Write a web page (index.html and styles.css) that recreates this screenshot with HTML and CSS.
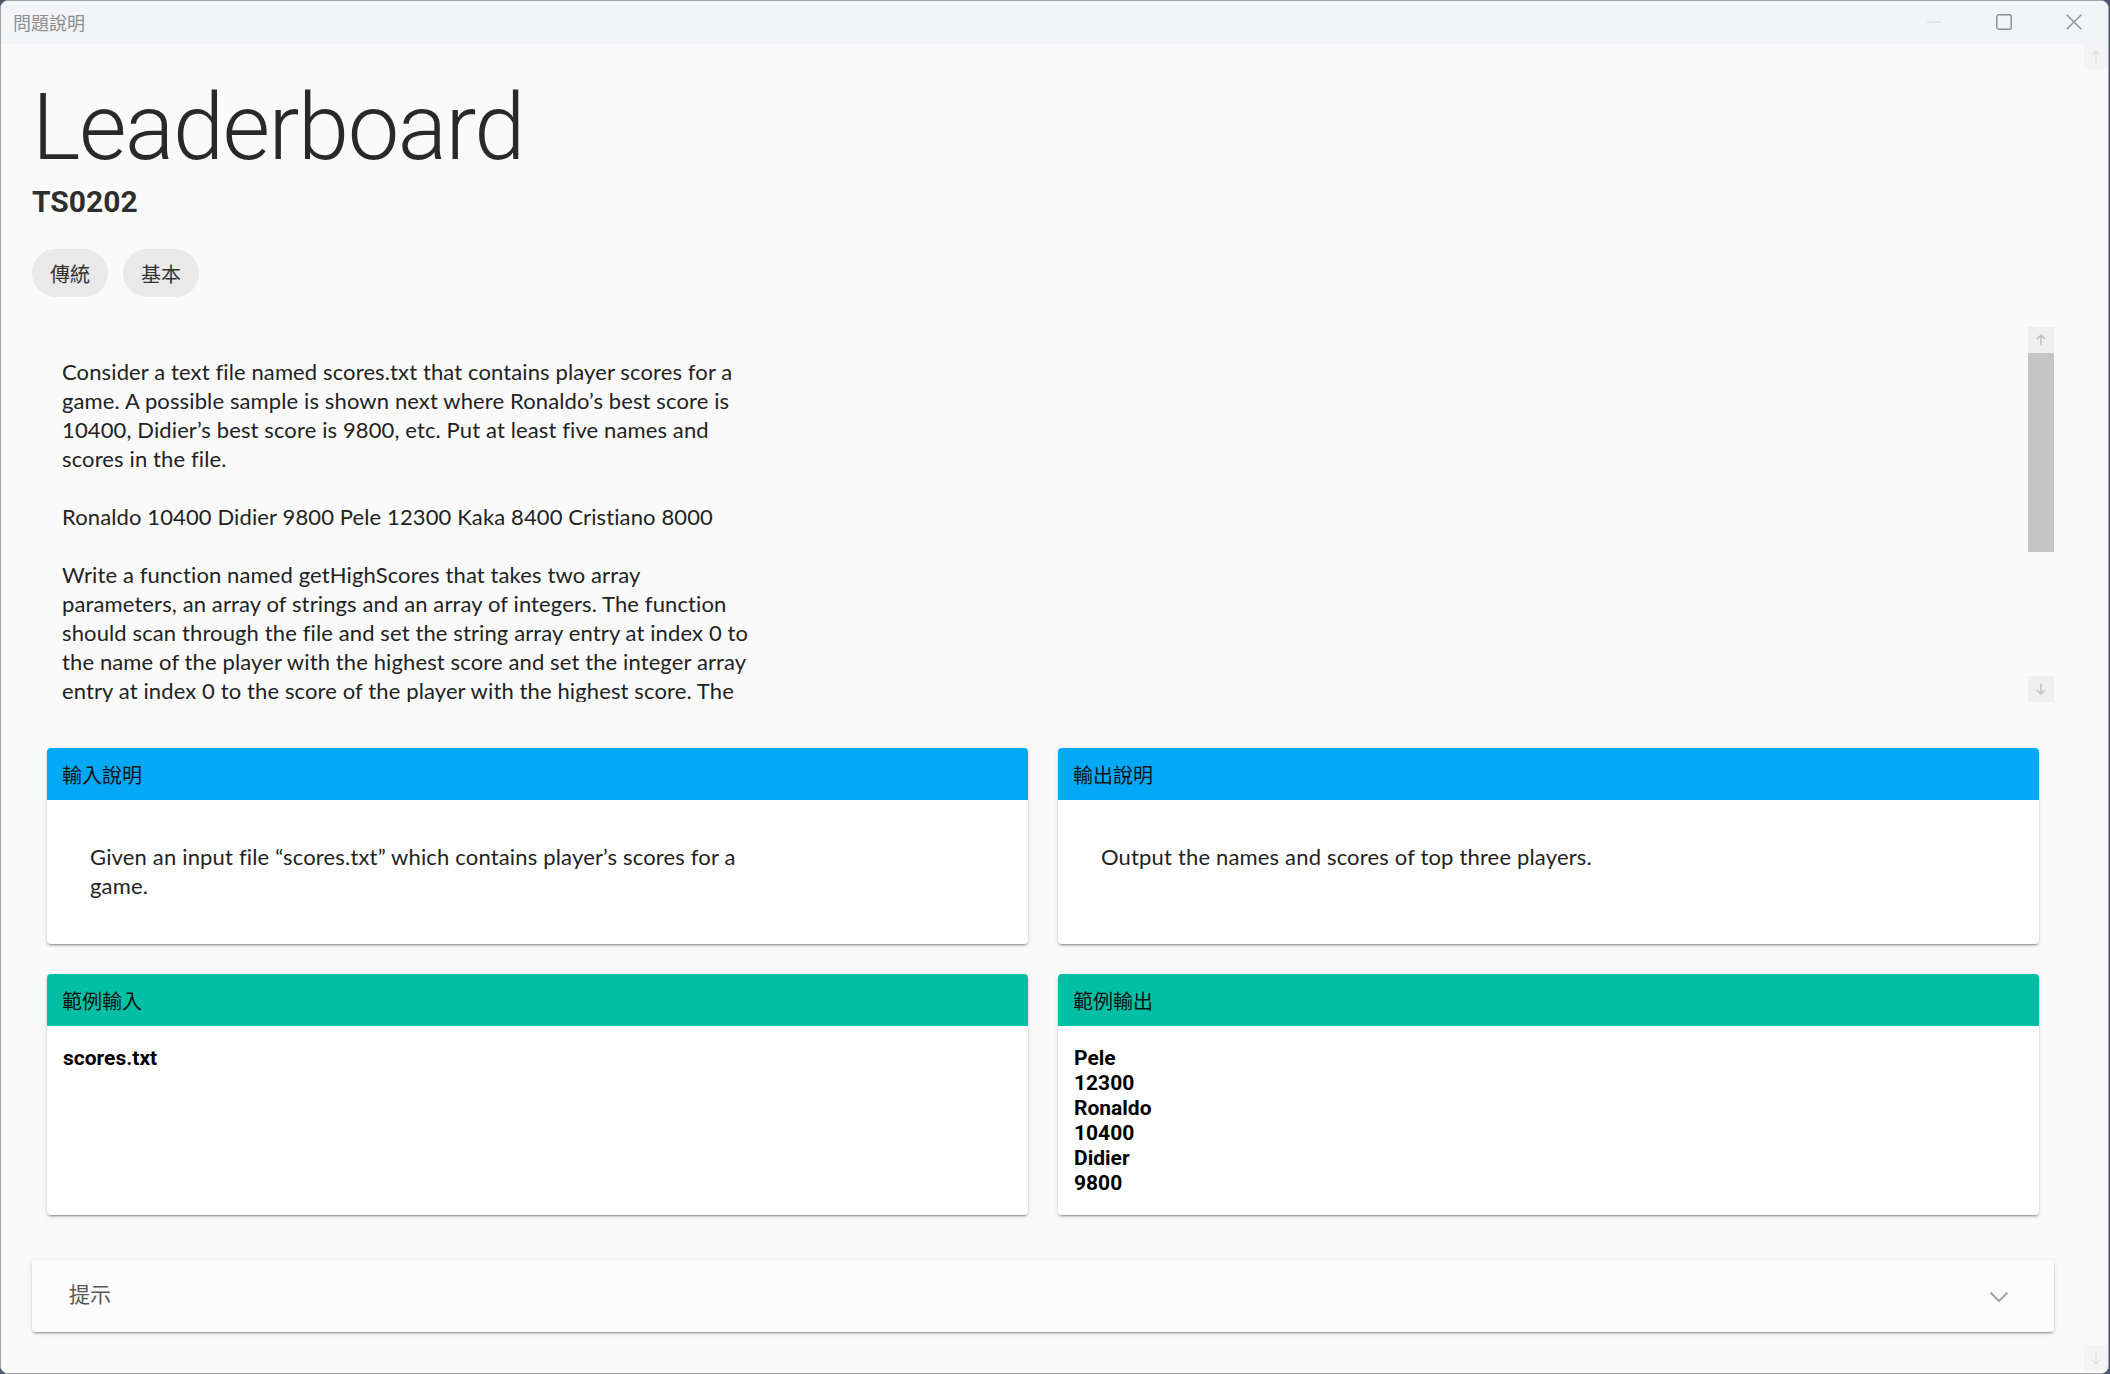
FILE: index.html
```html
<!DOCTYPE html>
<html lang="zh-Hant">
<head>
<meta charset="utf-8">
<title>問題說明</title>
<link rel="stylesheet" href="styles.css">
</head>
<body>
<div class="window">
  <div class="titlebar">
    <span class="title">問題說明</span>
    <div class="controls">
      <span class="ctl ctl-min"><svg width="16" height="16" viewBox="0 0 16 16"><line x1="0.5" y1="8" x2="15.5" y2="8" stroke="#d6d6d6" stroke-width="1"/></svg></span>
      <span class="ctl ctl-max"><svg width="16" height="16" viewBox="0 0 16 16"><rect x="0.8" y="0.8" width="14.4" height="14.4" rx="2" fill="none" stroke="#8c8c8c" stroke-width="1.4"/></svg></span>
      <span class="ctl ctl-close"><svg width="16" height="16" viewBox="0 0 16 16"><path d="M0.7 0.7 L15.3 15.3 M15.3 0.7 L0.7 15.3" stroke="#8c8c8c" stroke-width="1.3" fill="none"/></svg></span>
    </div>
  </div>
  <div class="client">
    <main class="page">
      <h1 class="problem-title">Leaderboard</h1>
      <div class="problem-id">TS0202</div>
      <div class="chips">
        <span class="chip">傳統</span>
        <span class="chip">基本</span>
      </div>

      <section class="desc">
        <div class="desc-text">
          <p>Consider a text file named scores.txt that contains player scores for a<br>game. A possible sample is shown next where Ronaldo’s best score is<br>10400, Didier’s best score is 9800, etc. Put at least five names and<br>scores in the file.</p>
          <p>Ronaldo 10400 Didier 9800 Pele 12300 Kaka 8400 Cristiano 8000</p>
          <p>Write a function named getHighScores that takes two array<br>parameters, an array of strings and an array of integers. The function<br>should scan through the file and set the string array entry at index 0 to<br>the name of the player with the highest score and set the integer array<br>entry at index 0 to the score of the player with the highest score. The</p>
        </div>
        <div class="vscroll">
          <div class="vs-btn"><svg width="10" height="12" viewBox="0 0 10 12"><path d="M5 11.5 V1 M1 5 L5 1 L9 5" stroke="#c2c2c2" stroke-width="1.5" fill="none"/></svg></div>
          <div class="vs-thumb"></div>
          <div class="vs-track"></div>
          <div class="vs-btn"><svg width="10" height="12" viewBox="0 0 10 12"><path d="M5 0.5 V11 M1 7 L5 11 L9 7" stroke="#c2c2c2" stroke-width="1.5" fill="none"/></svg></div>
        </div>
      </section>

      <div class="card-row">
        <div class="card">
          <div class="card-head head-blue">輸入說明</div>
          <div class="card-body prose">Given an input file “scores.txt” which contains player’s scores for a<br>game.</div>
        </div>
        <div class="card">
          <div class="card-head head-blue">輸出說明</div>
          <div class="card-body prose">Output the names and scores of top three players.</div>
        </div>
      </div>

      <div class="card-row row-sample">
        <div class="card">
          <div class="card-head head-green">範例輸入</div>
          <div class="card-body sample">scores.txt</div>
        </div>
        <div class="card">
          <div class="card-head head-green">範例輸出</div>
          <div class="card-body sample">Pele<br>12300<br>Ronaldo<br>10400<br>Didier<br>9800</div>
        </div>
      </div>

      <div class="hint">
        <span class="hint-label">提示</span>
        <svg class="chevron" width="20" height="12" viewBox="0 0 20 12"><polyline points="1.5,1.5 10,10 18.5,1.5" fill="none" stroke="#a3a3a3" stroke-width="2"/></svg>
      </div>
    </main>
    <div class="page-scroll">
      <div class="ps-btn"><svg width="10" height="14" viewBox="0 0 10 14"><path d="M5 13.5 V1 M1 5 L5 1 L9 5" stroke="#dedede" stroke-width="1.2" fill="none"/></svg></div>
      <div class="ps-track"></div>
      <div class="ps-btn"><svg width="10" height="14" viewBox="0 0 10 14"><path d="M5 0.5 V13 M1 9 L5 13 L9 9" stroke="#dedede" stroke-width="1.2" fill="none"/></svg></div>
    </div>
  </div>
</div>
</body>
</html>
```

FILE: styles.css
```css
* { box-sizing: border-box; }

html, body {
  margin: 0;
  padding: 0;
  width: 2110px;
  height: 1374px;
  overflow: hidden;
  background: #4b5570;
}

.window {
  width: 2109px;
  height: 1374px;
  border: 1px solid #a2a2a2;
  border-radius: 8px;
  background: #fafafa;
  overflow: hidden;
  display: flex;
  flex-direction: column;
}

.titlebar {
  height: 43px;
  flex: none;
  background: #f3f4f8;
  display: flex;
  align-items: center;
  justify-content: space-between;
}

.title {
  font-family: "Noto Sans CJK TC", "Noto Sans", sans-serif;
  font-size: 18px;
  color: #8e8e8e;
  padding-left: 12px;
  line-height: 1;
  margin-top: -1px;
}

.controls {
  display: flex;
  align-items: center;
  padding-right: 26px;
  gap: 54px;
  margin-top: -1px;
}

.ctl { display: block; width: 16px; height: 16px; }
.ctl svg { display: block; }

.client {
  flex: 1;
  display: flex;
  min-height: 0;
  background: #fafafa;
}

.page {
  flex: 1;
  min-width: 0;
  padding: 0 30px 0 31px;
  overflow: hidden;
}

.problem-title {
  font-family: Roboto, sans-serif;
  font-weight: 300;
  font-size: 92px;
  line-height: 96px;
  letter-spacing: -1.5px;
  color: rgba(0, 0, 0, 0.84);
  margin: 36px 0 0 0;
}

.problem-id {
  font-family: Roboto, sans-serif;
  font-weight: 700;
  font-size: 30px;
  line-height: 40px;
  color: rgba(0, 0, 0, 0.84);
  margin-top: 6px;
}

.chips {
  display: flex;
  gap: 15px;
  margin-top: 27px;
}

.chip {
  height: 48px;
  padding: 0 18px;
  border-radius: 24px;
  background: #e9e9e9;
  display: flex;
  align-items: center;
  font-family: "Noto Sans CJK TC", sans-serif;
  font-size: 20px;
  color: #333;
}

.desc {
  margin-top: 30px;
  height: 375px;
  display: flex;
}

.desc-text {
  flex: 1;
  overflow: hidden;
  padding: 30px 0 0 30px;
  font-family: Lato, "Open Sans", sans-serif;
  font-size: 22px;
  line-height: 29px;
  letter-spacing: 0.12px;
  color: #222;
  white-space: nowrap;
}

.desc-text p { margin: 0 0 29px 0; }

.vscroll {
  width: 26px;
  flex: none;
  display: flex;
  flex-direction: column;
}

.vs-btn {
  height: 26px;
  background: #efefef;
  display: flex;
  align-items: center;
  justify-content: center;
}

.vs-thumb { height: 199px; background: #c5c5c5; }
.vs-track { flex: 1; }

.card-row {
  margin-top: 46px;
  padding: 0 15px;
  display: grid;
  grid-template-columns: 1fr 1fr;
  column-gap: 30px;
}

.row-sample { margin-top: 30px; }

.card {
  background: #fff;
  border-radius: 4px;
  overflow: hidden;
  box-shadow: 0 3px 1px -2px rgba(0,0,0,.2), 0 2px 2px 0 rgba(0,0,0,.14), 0 1px 5px 0 rgba(0,0,0,.12);
}

.card-head {
  height: 52px;
  display: flex;
  align-items: center;
  padding-left: 15px;
  font-family: "Noto Sans CJK TC", sans-serif;
  font-size: 20px;
  color: #111;
}

.head-blue { background: #03a9f4; }
.head-green { background: #00bfa5; }

.card-body.prose {
  padding: 42px 43px 44px 43px;
  font-family: Lato, "Open Sans", sans-serif;
  font-size: 22px;
  line-height: 29px;
  letter-spacing: 0.17px;
  color: #222;
  white-space: nowrap;
}

.card-body.sample {
  padding: 20px 16px 19px 16px;
  font-family: Roboto, sans-serif;
  font-weight: 700;
  font-size: 21px;
  line-height: 25px;
  color: #000;
}

.hint {
  margin-top: 45px;
  height: 72px;
  border-radius: 4px;
  background: #fbfbfb;
  box-shadow: 0 3px 1px -2px rgba(0,0,0,.2), 0 2px 2px 0 rgba(0,0,0,.14), 0 1px 5px 0 rgba(0,0,0,.12);
  display: flex;
  align-items: center;
  justify-content: space-between;
  padding: 0 45px 0 37px;
}

.hint-label {
  font-family: "Noto Sans CJK TC", sans-serif;
  font-size: 21px;
  color: #555;
  margin-top: -6px;
}

.chevron { display: block; margin-top: 2px; }

.page-scroll {
  width: 24px;
  flex: none;
  display: flex;
  flex-direction: column;
  padding-bottom: 2px;
}

.ps-btn {
  height: 26px;
  background: #f4f4f4;
  display: flex;
  align-items: center;
  justify-content: center;
}

.ps-track { flex: 1; }
```
